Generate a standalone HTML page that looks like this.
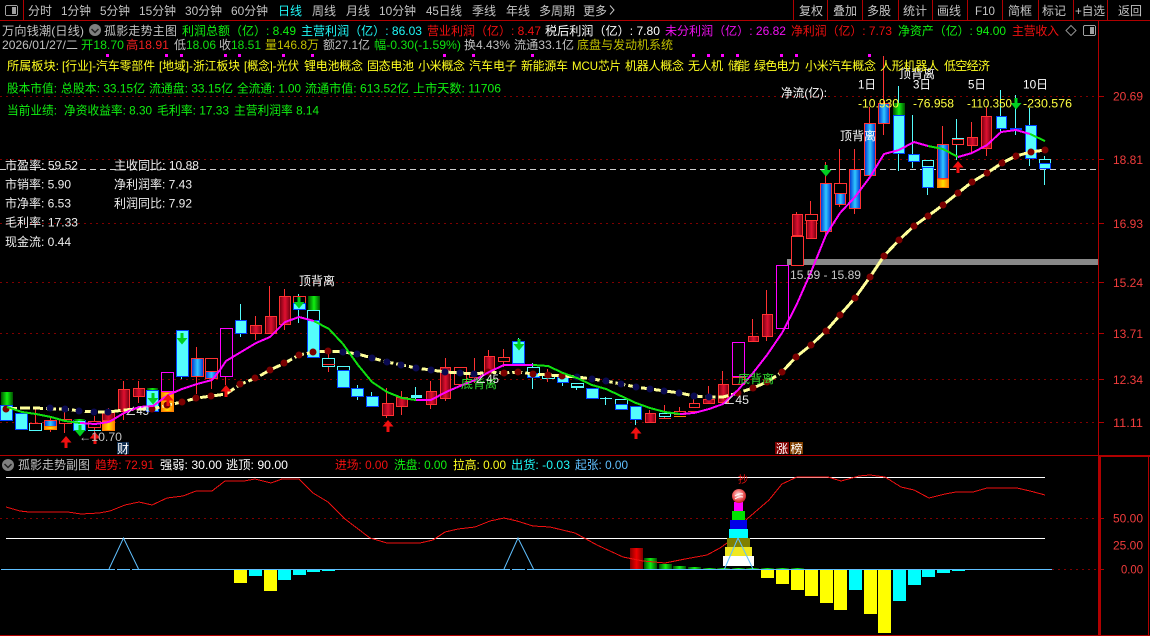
<!DOCTYPE html>
<html><head><meta charset="utf-8"><style>
html,body{margin:0;padding:0;background:#000;width:1150px;height:636px;overflow:hidden}
svg{display:block}
text{font-family:"Liberation Sans","WenQuanYi Zen Hei","Noto Sans CJK SC",sans-serif;font-size:12px}
.s{shape-rendering:crispEdges}
polyline{shape-rendering:crispEdges}
.c{fill:#54fcfc;stroke:#0040ff}
.r{fill:#000;stroke:#ff3232}
.rg{fill:url(#rg);stroke:#ff3232}
.bg{fill:url(#bg);stroke:#ff3232}
.bc{fill:#000;stroke:#54fcfc}
.og{fill:url(#og);stroke:#ff8000}
.gg{fill:url(#gg)}
.m{fill:none;stroke:#ff00ff}
.dn{fill:#0a0a50}.dr{fill:#7a0000}
</style></head><body>
<svg xmlns="http://www.w3.org/2000/svg" width="1150" height="636" viewBox="0 0 1150 636">
<defs>
<linearGradient id="rg" x1="0" x2="1" y1="0" y2="0"><stop offset="0" stop-color="#700010"/><stop offset=".5" stop-color="#e01030"/><stop offset="1" stop-color="#700010"/></linearGradient>
<linearGradient id="bg" x1="0" x2="1" y1="0" y2="0"><stop offset="0" stop-color="#0030d0"/><stop offset=".5" stop-color="#30c8ff"/><stop offset="1" stop-color="#0030d0"/></linearGradient>
<linearGradient id="og" x1="0" x2="1" y1="0" y2="0"><stop offset="0" stop-color="#ff8000"/><stop offset=".5" stop-color="#ffe000"/><stop offset="1" stop-color="#ff8000"/></linearGradient>
<linearGradient id="gg" x1="0" x2="1" y1="0" y2="0"><stop offset="0" stop-color="#005000"/><stop offset=".5" stop-color="#10f010"/><stop offset="1" stop-color="#005000"/></linearGradient>
<linearGradient id="rb" x1="0" x2="1" y1="0" y2="0"><stop offset="0" stop-color="#800000"/><stop offset=".5" stop-color="#f00000"/><stop offset="1" stop-color="#800000"/></linearGradient>
<radialGradient id="ball" cx=".45" cy=".4" r=".6"><stop offset="0" stop-color="#ffe8e8"/><stop offset=".6" stop-color="#f06060"/><stop offset="1" stop-color="#c02020"/></radialGradient>
<path id="ga" d="M-1.500 0h3v5h4l-5.500 6.500-5.500-6.500h4z" fill="#00d020"/>
<path id="ra" d="M0 0l5.500 6.500h-4v5.500h-3v-5.500h-4z" fill="#f01010"/>
</defs>
<rect width="1150" height="636" fill="#000"/>

<!-- grid -->
<g class="s" stroke="#800000" stroke-dasharray="2 4" fill="none">
<path d="M0 96.500H1098M0 159.500H1098M0 223.500H1098M0 282.500H1098M0 333.500H1098M0 379.500H1098M0 422.500H1098"/>
<path d="M0 518.500H1098"/><path d="M1052 569.500H1098"/>
</g>
<path class="s" d="M0 169.500H1098" stroke="#d0d0d0" stroke-dasharray="6 4" fill="none"/>
<rect class="s" x="787" y="259" width="311" height="6" fill="#888"/>

<!-- wicks -->
<path class="s" fill="none" stroke="#ff3232" d="M35.500 407V428M50.500 418V432M64.500 412V433M94.500 416V443M108.500 408V421M123.500 381V420M138.500 381V403M196.500 347V394M211.500 364V389M225.500 377V385M255.500 316V340M269.500 286V316M284.500 289V330M328.500 348V372M386.500 388V418M401.500 391V415M430.500 381V409M445.500 358V401M474.500 358V383M488.500 350V356M503.500 349V367M547.500 369V382M649.500 410V413M664.500 405V418M679.500 407V411M693.500 399V403M708.500 386V399M722.500 371V384M752.500 319V336M766.500 290V341M796.500 212V266M810.500 201V239M825.500 162V237M839.500 149V207M854.500 149V214M869.500 107V123M883.500 56V135M942.500 126V144M971.500 122V153M986.500 107V156"/>
<path class="s" fill="none" stroke="#54fcfc" d="M181.500 330V379M240.500 304V337M298.500 294V323M313.500 310V320M357.500 385V400M371.500 392V407M415.500 387V400M518.500 338V341M532.500 363V389M562.500 383V386M576.500 388V390M605.500 397V405M600 398.500H612M635.500 420V425M898.500 86V171M912.500 115V168M927.500 188V195M956.500 119V160M1000.500 90V132M1015.500 95V135M1029.500 108V166M1044.500 156V185"/>

<!-- candles -->
<g class="s">
<rect class="gg" x="1" y="392" width="12" height="13"/><rect class="c" x=".5" y="405.500" width="12" height="15"/>
<rect class="c" x="15.500" y="413.500" width="12" height="16"/>
<rect class="bc" x="29.500" y="423.500" width="12" height="7"/><path d="M30 423.500H41" stroke="#ff3232"/>
<rect class="bg" x="44.500" y="420.500" width="12" height="6"/><rect class="og" x="44.500" y="426.500" width="12" height="3"/>
<rect class="r" x="59.500" y="419.500" width="12" height="4"/>
<rect class="c" x="73.500" y="420.500" width="12" height="10"/><rect class="gg" x="74" y="419" width="11" height="2"/>
<rect class="r" x="88.500" y="421.500" width="12" height="6"/><path d="M88 430.500H101" stroke="#54fcfc"/>
<rect class="rg" x="102.500" y="411.500" width="12" height="9"/><rect class="og" x="102.500" y="421.500" width="12" height="9"/>
<rect class="rg" x="118.500" y="389.500" width="11" height="22"/>
<rect class="rg" x="133.500" y="388.500" width="11" height="8"/>
<rect class="c" x="146.500" y="390.500" width="12" height="21"/><rect class="gg" x="147" y="388" width="11" height="2"/>
<rect class="m" x="161.500" y="372.500" width="12" height="19"/><rect class="og" x="161.500" y="392.500" width="12" height="19"/>
<rect class="c" x="176.500" y="330.500" width="12" height="46"/>
<rect class="bg" x="191.500" y="358.500" width="12" height="18"/>
<rect class="r" x="205.500" y="358.500" width="12" height="13"/><rect class="bg" x="205.500" y="371.500" width="12" height="7"/>
<rect class="m" x="220.500" y="328.500" width="12" height="48"/>
<rect class="c" x="235.500" y="320.500" width="11" height="13"/>
<rect class="rg" x="250.500" y="325.500" width="11" height="8"/>
<rect class="rg" x="265.500" y="316.500" width="11" height="17"/>
<rect class="rg" x="279.500" y="296.500" width="11" height="28"/>
<rect class="r" x="293.500" y="296.500" width="12" height="7"/><rect class="c" x="293.500" y="303.500" width="12" height="6"/>
<rect class="gg" x="308" y="296" width="12" height="14"/><rect class="bc" x="307.500" y="310.500" width="12" height="10"/><rect class="c" x="307.500" y="320.500" width="12" height="37"/>
<rect class="bc" x="322.500" y="358.500" width="12" height="8"/><path d="M323 364.500H335" stroke="#ff3232"/>
<rect class="bc" x="337.500" y="366.500" width="12" height="4"/><rect class="c" x="337.500" y="370.500" width="12" height="17"/>
<rect class="c" x="351.500" y="388.500" width="12" height="8"/>
<rect class="c" x="366.500" y="396.500" width="12" height="10"/>
<rect class="rg" x="382.500" y="403.500" width="11" height="12"/>
<rect class="rg" x="396.500" y="397.500" width="11" height="9"/>
<rect class="s" x="411" y="395" width="11" height="3" fill="#54fcfc"/>
<rect class="rg" x="426.500" y="391.500" width="10" height="13"/>
<rect class="rg" x="440.500" y="367.500" width="10" height="31"/>
<rect class="r" x="454.500" y="367.500" width="12" height="17"/>
<rect class="r" x="469.500" y="372.500" width="11" height="5"/>
<rect class="rg" x="484.500" y="356.500" width="10" height="16"/>
<rect class="r" x="498.500" y="357.500" width="11" height="4"/>
<rect class="c" x="512.500" y="341.500" width="12" height="22"/>
<rect class="bc" x="527.500" y="367.500" width="12" height="6"/><rect class="c" x="527.500" y="373.500" width="12" height="4"/>
<rect class="bc" x="542.500" y="375.500" width="12" height="3"/>
<rect class="c" x="557.500" y="377.500" width="11" height="5"/>
<rect class="bc" x="571.500" y="383.500" width="12" height="4"/><path d="M572 386.500H583" stroke="#54fcfc"/>
<rect class="c" x="586.500" y="388.500" width="12" height="10"/>
<rect class="bc" x="615.500" y="399.500" width="12" height="5"/><rect class="c" x="615.500" y="404.500" width="12" height="5"/>
<rect class="c" x="630.500" y="406.500" width="11" height="13"/>
<rect class="rg" x="645.500" y="413.500" width="10" height="9"/>
<rect class="bc" x="659.500" y="413.500" width="11" height="3"/><path d="M659 418.500H671" stroke="#ff3232"/>
<rect class="r" x="674.500" y="411.500" width="11" height="3"/><path d="M674 416.500H686" stroke="#ff8000"/>
<rect class="r" x="689.500" y="403.500" width="10" height="4"/><path d="M688 411.500H700" stroke="#ff3232"/>
<rect class="rg" x="703.500" y="399.500" width="11" height="4"/>
<rect class="rg" x="718.500" y="384.500" width="10" height="18"/>
<rect class="m" x="732.500" y="342.500" width="12" height="34"/><rect class="r" x="732.500" y="377.500" width="12" height="7"/>
<rect class="rg" x="748.500" y="336.500" width="10" height="5"/>
<rect class="rg" x="762.500" y="314.500" width="10" height="22"/>
<rect class="m" x="776.500" y="265.500" width="12" height="63"/>
<rect class="r" x="791.500" y="236.500" width="12" height="29"/><rect class="rg" x="792.500" y="214.500" width="10" height="21"/>
<rect class="r" x="805.500" y="214.500" width="12" height="6"/><rect class="rg" x="806.500" y="220.500" width="10" height="18"/>
<rect class="bg" x="820.500" y="183.500" width="11" height="48"/>
<rect class="r" x="834.500" y="183.500" width="12" height="10"/><rect class="bg" x="835.500" y="193.500" width="10" height="11"/>
<rect class="bg" x="849.500" y="169.500" width="11" height="39"/>
<rect class="bg" x="864.500" y="123.500" width="11" height="52"/>
<rect class="bg" x="878.500" y="103.500" width="11" height="20"/>
<rect class="gg" x="893" y="103" width="12" height="12"/><rect class="c" x="893.500" y="115.500" width="11" height="38"/>
<rect class="c" x="908.500" y="154.500" width="11" height="7"/>
<rect class="bc" x="922.500" y="160.500" width="11" height="6"/><rect class="c" x="922.500" y="167.500" width="11" height="20"/>
<rect class="bg" x="937.500" y="144.500" width="11" height="34"/><rect class="og" x="937.500" y="179.500" width="11" height="8"/>
<rect class="r" x="952.500" y="139.500" width="11" height="5"/><path d="M952 138.500H964" stroke="#54fcfc"/>
<rect class="rg" x="967.500" y="137.500" width="10" height="8"/>
<rect class="rg" x="981.500" y="116.500" width="10" height="32"/>
<rect class="c" x="996.500" y="116.500" width="10" height="12"/>
<rect class="c" x="1010.500" y="128.500" width="11" height="1"/>
<rect class="c" x="1025.500" y="125.500" width="11" height="33"/>
<rect class="bc" x="1039.500" y="159.500" width="11" height="4"/><rect class="c" x="1039.500" y="163.500" width="11" height="5"/>
</g>

<!-- cream MA -->
<polyline fill="none" stroke="#ffff99" stroke-width="3" stroke-dasharray="10 3" points="7,409 22,408 36,408 51,409 65,409 80,411 95,412 109,412 124,410 139,409 153,409 168,405 182,402 197,398 212,396 226,394 241,384 256,378 270,370 285,363 299,355 314,352 329,351 343,352 358,354 372,358 387,362 402,365 416,368 431,370 446,372 460,373 475,374 489,372 504,373 519,372 533,374 548,375 563,376 577,377 592,379 606,381 621,384 636,387 650,389 665,391 680,393 694,396 709,397 723,397 738,393 753,388 767,382 782,372"/>
<polyline fill="none" stroke="#ffff99" stroke-width="3" points="782,372 796,357 811,345 826,331 840,315 855,298 870,277 884,256 899,240 914,226 928,216 943,205 958,193 972,182 987,173 1002,163 1016,156 1031,152 1045,150"/>
<!-- dots -->
<g>
<circle class="dr" cx="6" cy="409" r="3.500"/>
<circle class="dn" cx="50" cy="408" r="3.500"/><circle class="dn" cx="65" cy="409" r="3.500"/><circle class="dn" cx="79" cy="411" r="3.500"/><circle class="dn" cx="94" cy="412" r="3.500"/><circle class="dn" cx="108" cy="412" r="3.500"/>
<circle class="dr" cx="152" cy="409" r="3.500"/><circle class="dr" cx="167" cy="405" r="3.500"/><circle class="dr" cx="182" cy="402" r="3.500"/><circle class="dr" cx="196" cy="398" r="3.500"/><circle class="dr" cx="211" cy="396" r="3.500"/>
<circle class="dr" cx="240" cy="384" r="3.500"/><circle class="dr" cx="255" cy="378" r="3.500"/><circle class="dr" cx="270" cy="370" r="3.500"/><circle class="dr" cx="284" cy="363" r="3.500"/><circle class="dr" cx="299" cy="355" r="3.500"/><circle class="dr" cx="313" cy="352" r="3.500"/><circle class="dr" cx="328" cy="351" r="3.500"/>
<circle class="dn" cx="343" cy="352" r="3.500"/><circle class="dn" cx="357" cy="354" r="3.500"/><circle class="dn" cx="372" cy="358" r="3.500"/><circle class="dn" cx="387" cy="362" r="3.500"/><circle class="dn" cx="401" cy="365" r="3.500"/><circle class="dn" cx="416" cy="368" r="3.500"/><circle class="dn" cx="431" cy="370" r="3.500"/><circle class="dn" cx="445" cy="372" r="3.500"/><circle class="dn" cx="460" cy="373" r="3.500"/><circle class="dn" cx="474" cy="374" r="3.500"/>
<circle class="dr" cx="488" cy="372" r="3.500"/><circle class="dr" cx="504" cy="373" r="3.500"/><circle class="dr" cx="518" cy="372" r="3.500"/><circle class="dr" cx="533" cy="374" r="3.500"/><circle class="dr" cx="548" cy="375" r="3.500"/><circle class="dr" cx="562" cy="376" r="3.500"/>
<circle class="dn" cx="577" cy="377" r="3.500"/><circle class="dn" cx="592" cy="379" r="3.500"/><circle class="dn" cx="606" cy="381" r="3.500"/><circle class="dn" cx="621" cy="384" r="3.500"/><circle class="dn" cx="636" cy="387" r="3.500"/><circle class="dn" cx="650" cy="389" r="3.500"/><circle class="dn" cx="664" cy="391" r="3.500"/><circle class="dn" cx="679" cy="393" r="3.500"/><circle class="dn" cx="694" cy="396" r="3.500"/><circle class="dn" cx="709" cy="397" r="3.500"/>
<circle class="dr" cx="738" cy="393" r="3.500"/><circle class="dr" cx="753" cy="388" r="3.500"/><circle class="dr" cx="767" cy="382" r="3.500"/><circle class="dr" cx="782" cy="372" r="3.500"/><circle class="dr" cx="796" cy="357" r="3.500"/><circle class="dr" cx="811" cy="345" r="3.500"/><circle class="dr" cx="826" cy="331" r="3.500"/><circle class="dr" cx="840" cy="315" r="3.500"/><circle class="dr" cx="855" cy="298" r="3.500"/>
<circle class="dr" cx="870" cy="277" r="3.500"/><circle class="dr" cx="884" cy="256" r="3.500"/><circle class="dr" cx="899" cy="240" r="3.500"/><circle class="dr" cx="914" cy="226" r="3.500"/><circle class="dr" cx="928" cy="216" r="3.500"/><circle class="dr" cx="943" cy="205" r="3.500"/><circle class="dr" cx="958" cy="193" r="3.500"/><circle class="dr" cx="972" cy="182" r="3.500"/><circle class="dr" cx="987" cy="173" r="3.500"/><circle class="dr" cx="1002" cy="163" r="3.500"/><circle class="dr" cx="1016" cy="156" r="3.500"/><circle class="dr" cx="1031" cy="152" r="3.500"/><circle class="dr" cx="1045" cy="150" r="3.500"/>
</g>
<!-- trend line -->
<g fill="none" stroke-width="2">
<polyline stroke="#10e010" points="7,407 22,412 36,414 51,417 65,421 80,423"/>
<polyline stroke="#ff00ff" points="80,423 95,424 109,422 124,413 139,407 153,406 168,395 182,389 197,384 212,380 220,370 226,361 241,352 256,343 270,337 285,322 299,317 314,321"/>
<polyline stroke="#10e010" points="314,321 329,329 343,344 358,365 372,382 387,392 402,398 416,400"/>
<polyline stroke="#ff00ff" points="416,400 431,400 446,392 460,386 475,380 489,372 504,365 519,365 533,365"/>
<polyline stroke="#10e010" points="533,365 548,366 563,373 577,378 592,385 606,389 621,396 636,403 650,408 665,412 680,414"/>
<polyline stroke="#ff00ff" points="680,414 694,413 709,409 723,404 738,390 753,373 767,355 782,333 796,306 811,272 826,235 840,213 855,197 870,177 884,154 899,150 914,142 928,146"/>
<polyline stroke="#10e010" points="928,146 943,149 958,157"/>
<polyline stroke="#ff00ff" points="958,157 972,153 987,145 1001,132 1016,130 1030,134"/>
<polyline stroke="#10e010" points="1030,134 1045,141"/>
</g>
<!-- arrows -->
<use href="#ga" x="80" y="425"/><use href="#ga" x="153" y="393"/><use href="#ga" x="182" y="333"/><use href="#ga" x="299" y="297"/><use href="#ga" x="519" y="339"/><use href="#ga" x="826" y="165"/><use href="#ga" x="1016" y="98"/>
<use href="#ra" x="66" y="436"/><use href="#ra" x="95" y="432"/><use href="#ra" x="168" y="394"/><use href="#ra" x="226" y="385"/><use href="#ra" x="388" y="420"/><use href="#ra" x="636" y="427"/><use href="#ra" x="958" y="161"/>

<!-- chart labels -->
<text x="299" y="285" fill="#fff" textLength="36" lengthAdjust="spacingAndGlyphs">顶背离</text>
<text x="840" y="140" fill="#fff" textLength="36" lengthAdjust="spacingAndGlyphs">顶背离</text>
<text x="899" y="78" fill="#fff" textLength="36" lengthAdjust="spacingAndGlyphs">顶背离</text>
<text x="461" y="388" fill="#30e030" textLength="36" lengthAdjust="spacingAndGlyphs">底背离</text>
<text x="738" y="383" fill="#30e030" textLength="36" lengthAdjust="spacingAndGlyphs">底背离</text>
<text x="125" y="415" fill="#e8e8e8" textLength="24" lengthAdjust="spacingAndGlyphs">∠45</text>
<text x="475" y="383" fill="#e8e8e8" textLength="24" lengthAdjust="spacingAndGlyphs">∠45</text>
<text x="723" y="404" fill="#e8e8e8" textLength="26" lengthAdjust="spacingAndGlyphs">∠45</text>
<text x="79" y="441" fill="#c0c0c0" textLength="43" lengthAdjust="spacingAndGlyphs">←10.70</text>
<rect x="117" y="442" width="12" height="12" fill="#102e50"/><text x="117" y="453" fill="#fff">财</text>
<rect x="775" y="442" width="14" height="12" fill="#800000"/><text x="776" y="453" fill="#fff">涨</text>
<rect x="790" y="442" width="13" height="12" fill="#804000"/><text x="790.500" y="453" fill="#fff">榜</text>
<text x="790" y="279" fill="#c8c8c8" textLength="71" lengthAdjust="spacingAndGlyphs">15.59 - 15.89</text>
<text x="781" y="97" fill="#fff" textLength="46" lengthAdjust="spacingAndGlyphs">净流(亿):</text>
<g fill="#fff">
<text x="858" y="88.500" textLength="18" lengthAdjust="spacingAndGlyphs">1日</text>
<text x="913" y="88.500" textLength="18" lengthAdjust="spacingAndGlyphs">3日</text>
<text x="968" y="88.500" textLength="18" lengthAdjust="spacingAndGlyphs">5日</text>
<text x="1023" y="88.500" textLength="25" lengthAdjust="spacingAndGlyphs">10日</text>
</g>
<g fill="#ffff40">
<text x="858" y="107.500" textLength="41" lengthAdjust="spacingAndGlyphs">-10.930</text>
<text x="913" y="107.500" textLength="41" lengthAdjust="spacingAndGlyphs">-76.958</text>
<text x="967" y="107.500" textLength="45" lengthAdjust="spacingAndGlyphs">-110.350</text>
<text x="1023" y="107.500" textLength="49" lengthAdjust="spacingAndGlyphs">-230.576</text>
</g>

<!-- left stats -->
<g fill="#eee">
<text x="5" y="169.500" textLength="73" lengthAdjust="spacingAndGlyphs">市盈率: 59.52</text>
<text x="5" y="188.500" textLength="66" lengthAdjust="spacingAndGlyphs">市销率: 5.90</text>
<text x="5" y="207.500" textLength="66" lengthAdjust="spacingAndGlyphs">市净率: 6.53</text>
<text x="5" y="226.500" textLength="73" lengthAdjust="spacingAndGlyphs">毛利率: 17.33</text>
<text x="5" y="246" textLength="66" lengthAdjust="spacingAndGlyphs">现金流: 0.44</text>
<text x="114" y="169.500" textLength="85" lengthAdjust="spacingAndGlyphs">主收同比: 10.88</text>
<text x="114" y="188.500" textLength="78" lengthAdjust="spacingAndGlyphs">净利润率: 7.43</text>
<text x="114" y="207.500" textLength="78" lengthAdjust="spacingAndGlyphs">利润同比: 7.92</text>
</g>

<!-- info rows -->
<g fill="#ffff20">
<text x="7" y="70" textLength="52" lengthAdjust="spacingAndGlyphs">所属板块:</text>
<text x="62" y="70" textLength="93" lengthAdjust="spacingAndGlyphs">[行业]-汽车零部件</text>
<text x="159" y="70" textLength="81" lengthAdjust="spacingAndGlyphs">[地域]-浙江板块</text>
<text x="244" y="70" textLength="55" lengthAdjust="spacingAndGlyphs">[概念]-光伏</text>
<text x="304" y="70" textLength="59">锂电池概念</text>
<text x="367" y="70" textLength="47">固态电池</text>
<text x="418" y="70" textLength="47">小米概念</text>
<text x="469" y="70" textLength="48">汽车电子</text>
<text x="521" y="70" textLength="47">新能源车</text>
<text x="572" y="70" textLength="49" lengthAdjust="spacingAndGlyphs">MCU芯片</text>
<text x="625" y="70" textLength="59">机器人概念</text>
<text x="688" y="70" textLength="35">无人机</text>
<text x="728" y="70" textLength="22">储能</text>
<text x="754" y="70" textLength="46">绿色电力</text>
<text x="805" y="70" textLength="71">小米汽车概念</text>
<text x="880" y="70" textLength="59">人形机器人</text>
<text x="944" y="70" textLength="46">低空经济</text>
</g>
<g class="s" fill="#ff00ff"><rect x="106" y="54" width="3" height="3"/><rect x="165" y="54" width="3" height="3"/><rect x="180" y="54" width="3" height="3"/><rect x="224" y="54" width="3" height="3"/><rect x="238" y="54" width="3" height="3"/><rect x="282" y="54" width="3" height="3"/><rect x="311" y="54" width="3" height="3"/><rect x="443" y="54" width="3" height="3"/><rect x="472" y="54" width="3" height="3"/><rect x="531" y="54" width="3" height="3"/><rect x="692" y="54" width="3" height="3"/><rect x="707" y="54" width="3" height="3"/><rect x="721" y="54" width="3" height="3"/><rect x="736" y="54" width="3" height="3"/><rect x="780" y="54" width="3" height="3"/><rect x="795" y="54" width="3" height="3"/><rect x="868" y="54" width="3" height="3"/></g>
<g fill="#10f010">
<text x="7" y="92.500" textLength="50" lengthAdjust="spacingAndGlyphs">股本市值:</text>
<text x="61" y="92.500" textLength="84" lengthAdjust="spacingAndGlyphs">总股本: 33.15亿</text>
<text x="149" y="92.500" textLength="84" lengthAdjust="spacingAndGlyphs">流通盘: 33.15亿</text>
<text x="237" y="92.500" textLength="64" lengthAdjust="spacingAndGlyphs">全流通: 1.00</text>
<text x="305" y="92.500" textLength="104" lengthAdjust="spacingAndGlyphs">流通市值: 613.52亿</text>
<text x="413" y="92.500" textLength="88" lengthAdjust="spacingAndGlyphs">上市天数: 11706</text>
<text x="7" y="114.500" textLength="50" lengthAdjust="spacingAndGlyphs">当前业绩:</text>
<text x="64" y="114.500" textLength="88" lengthAdjust="spacingAndGlyphs">净资收益率: 8.30</text>
<text x="157" y="114.500" textLength="72" lengthAdjust="spacingAndGlyphs">毛利率: 17.33</text>
<text x="234" y="114.500" textLength="85" lengthAdjust="spacingAndGlyphs">主营利润率 8.14</text>
</g>

<!-- row 2 -->
<text x="2" y="35" fill="#c0c0c0" textLength="82" lengthAdjust="spacingAndGlyphs">万向钱潮(日线)</text>
<circle cx="95" cy="30" r="6" fill="#808080"/><path d="M91.500 29l3.500 3.500 3.500-3.500" fill="none" stroke="#222" stroke-width="1.500"/>
<text x="104" y="35" fill="#c0c0c0" textLength="73">孤影走势主图</text>
<text x="182" y="35" fill="#10f010" textLength="114" lengthAdjust="spacingAndGlyphs">利润总额（亿）: 8.49</text>
<text x="301" y="35" fill="#20f8f8" textLength="121" lengthAdjust="spacingAndGlyphs">主营利润（亿）: 86.03</text>
<text x="427" y="35" fill="#f01010" textLength="114" lengthAdjust="spacingAndGlyphs">营业利润（亿）: 8.47</text>
<text x="545" y="35" fill="#fff" textLength="115" lengthAdjust="spacingAndGlyphs">税后利润（亿）: 7.80</text>
<text x="665" y="35" fill="#f010f0" textLength="121" lengthAdjust="spacingAndGlyphs">未分利润（亿）: 26.82</text>
<text x="791" y="35" fill="#f01010" textLength="101" lengthAdjust="spacingAndGlyphs">净利润（亿）: 7.73</text>
<text x="898" y="35" fill="#10f010" textLength="108" lengthAdjust="spacingAndGlyphs">净资产（亿）: 94.00</text>
<text x="1012" y="35" fill="#f01010" textLength="47">主营收入</text>
<path d="M1071 25.500l5 5-5 5-5-5z" fill="none" stroke="#909090"/>
<rect class="s" x="1083.500" y="25.500" width="12" height="10" rx="1.500" fill="#000" stroke="#a0a0a0"/><rect class="s" x="1090" y="27" width="4" height="7" fill="#a0a0a0"/>

<!-- row 3 -->
<text x="2" y="49" fill="#c0c0c0" textLength="76" lengthAdjust="spacingAndGlyphs">2026/01/27/二</text>
<text x="81" y="49" fill="#10e010" textLength="43" lengthAdjust="spacingAndGlyphs">开18.70</text>
<text x="126" y="49" fill="#f02020" textLength="43" lengthAdjust="spacingAndGlyphs">高18.91</text>
<text x="174" y="49" fill="#c0c0c0" textLength="12">低</text><text x="186" y="49" fill="#10e010" textLength="30" lengthAdjust="spacingAndGlyphs">18.06</text>
<text x="219" y="49" fill="#c0c0c0" textLength="12">收</text><text x="231" y="49" fill="#10e010" textLength="30" lengthAdjust="spacingAndGlyphs">18.51</text>
<text x="265" y="49" fill="#c0c000" textLength="54" lengthAdjust="spacingAndGlyphs">量146.8万</text>
<text x="323" y="49" fill="#c0c0c0" textLength="47" lengthAdjust="spacingAndGlyphs">额27.1亿</text>
<text x="374" y="49" fill="#10e010" textLength="87" lengthAdjust="spacingAndGlyphs">幅-0.30(-1.59%)</text>
<text x="464" y="49" fill="#c0c0c0" textLength="46" lengthAdjust="spacingAndGlyphs">换4.43%</text>
<text x="514" y="49" fill="#c0c0c0" textLength="60" lengthAdjust="spacingAndGlyphs">流通33.1亿</text>
<text x="577" y="49" fill="#c0c000" textLength="96">底盘与发动机系统</text>

<!-- toolbar -->
<g class="s" stroke="#b00000" fill="none">
<path d="M0 20.500H1150M23.500 0V20M793.500 0V20M827.500 0V20M862.500 0V20M898.500 0V20M932.500 0V20M967.500 0V20M1002.500 0V20M1038.500 0V20M1073.500 0V20M1107.500 0V20"/>
<path d="M1098.500 20V636M1099.500 456V636M1100.500 456V636M1148.500 456V636M0 455.500H1150M0 635.500H1150M1099 456.500H1150"/>
<path d="M1098 96.500H1104M1098 159.500H1104M1098 223.500H1104M1098 282.500H1104M1098 333.500H1104M1098 379.500H1104M1098 422.500H1104M1100 518.500H1104M1100 569.500H1104"/>
</g>
<rect class="s" x="5.500" y="5.500" width="12" height="10" rx="1.500" fill="#000" stroke="#a0a0a0"/><rect class="s" x="12" y="7" width="4" height="7" fill="#a0a0a0"/>
<g fill="#c4c4c4">
<text x="28" y="15">分时</text><text x="61" y="15" textLength="30" lengthAdjust="spacingAndGlyphs">1分钟</text><text x="100" y="15" textLength="30" lengthAdjust="spacingAndGlyphs">5分钟</text><text x="139" y="15" textLength="37" lengthAdjust="spacingAndGlyphs">15分钟</text><text x="185" y="15" textLength="37" lengthAdjust="spacingAndGlyphs">30分钟</text><text x="231" y="15" textLength="37" lengthAdjust="spacingAndGlyphs">60分钟</text>
<text x="278" y="15" fill="#20f8f8">日线</text><text x="312" y="15">周线</text><text x="346" y="15">月线</text><text x="379" y="15" textLength="37" lengthAdjust="spacingAndGlyphs">10分钟</text><text x="426" y="15" textLength="36" lengthAdjust="spacingAndGlyphs">45日线</text><text x="472" y="15">季线</text><text x="506" y="15">年线</text><text x="539" y="15">多周期</text><text x="583" y="15">更多</text>
<path d="M610 5.500l4 4.500-4 4.500" fill="none" stroke="#c4c4c4"/>
<text x="799" y="15">复权</text><text x="833" y="15">叠加</text><text x="867" y="15">多股</text><text x="903" y="15">统计</text><text x="937" y="15">画线</text><text x="975" y="15" textLength="20" lengthAdjust="spacingAndGlyphs">F10</text><text x="1008" y="15">简框</text><text x="1042" y="15">标记</text><text x="1075" y="15" textLength="30" lengthAdjust="spacingAndGlyphs">+自选</text><text x="1118" y="15">返回</text>
</g>

<!-- axis labels -->
<g fill="#f03c3c">
<text x="1113" y="100.500" textLength="30" lengthAdjust="spacingAndGlyphs">20.69</text>
<text x="1113" y="164" textLength="30" lengthAdjust="spacingAndGlyphs">18.81</text>
<text x="1113" y="228" textLength="30" lengthAdjust="spacingAndGlyphs">16.93</text>
<text x="1113" y="287" textLength="30" lengthAdjust="spacingAndGlyphs">15.24</text>
<text x="1113" y="338" textLength="30" lengthAdjust="spacingAndGlyphs">13.71</text>
<text x="1113" y="384" textLength="30" lengthAdjust="spacingAndGlyphs">12.34</text>
<text x="1113" y="427" textLength="30" lengthAdjust="spacingAndGlyphs">11.11</text>
<text x="1113" y="522.500" textLength="30" lengthAdjust="spacingAndGlyphs">50.00</text>
<text x="1113" y="549.500" textLength="30" lengthAdjust="spacingAndGlyphs">25.00</text>
<text x="1121" y="573.500" textLength="22" lengthAdjust="spacingAndGlyphs">0.00</text>
</g>

<!-- sub chart header -->
<circle cx="8" cy="465" r="6" fill="#808080"/><path d="M4.500 464l3.500 3.500 3.500-3.500" fill="none" stroke="#222" stroke-width="1.500"/>
<text x="18" y="469" fill="#c0c0c0" textLength="72">孤影走势副图</text>
<text x="95" y="469" fill="#f01010" textLength="59" lengthAdjust="spacingAndGlyphs">趋势: 72.91</text>
<text x="160" y="469" fill="#fff" textLength="62" lengthAdjust="spacingAndGlyphs">强弱: 30.00</text>
<text x="226" y="469" fill="#fff" textLength="62" lengthAdjust="spacingAndGlyphs">逃顶: 90.00</text>
<text x="335" y="469" fill="#f01010" textLength="53" lengthAdjust="spacingAndGlyphs">进场: 0.00</text>
<text x="394" y="469" fill="#10f010" textLength="53" lengthAdjust="spacingAndGlyphs">洗盘: 0.00</text>
<text x="453" y="469" fill="#ffff20" textLength="53" lengthAdjust="spacingAndGlyphs">拉高: 0.00</text>
<text x="511" y="469" fill="#20f8f8" textLength="59" lengthAdjust="spacingAndGlyphs">出货: -0.03</text>
<text x="575" y="469" fill="#60c0ff" textLength="53" lengthAdjust="spacingAndGlyphs">起张: 0.00</text>

<!-- sub chart -->
<g class="s">
<path d="M6 477.500H1045M6 538.500H1045" stroke="#fff" fill="none"/>
<g fill="#ffff00"><rect x="234" y="570" width="13" height="13"/><rect x="264" y="570" width="13" height="21"/><rect x="761" y="570" width="13" height="8"/><rect x="776" y="570" width="13" height="14"/><rect x="791" y="570" width="13" height="20"/><rect x="805" y="570" width="13" height="26"/><rect x="820" y="570" width="13" height="33"/><rect x="834" y="570" width="13" height="40"/><rect x="864" y="570" width="13" height="44"/><rect x="878" y="570" width="13" height="63"/></g>
<g fill="#00ffff"><rect x="249" y="570" width="13" height="6"/><rect x="278" y="570" width="13" height="10"/><rect x="293" y="570" width="13" height="5"/><rect x="307" y="570" width="13" height="2"/><rect x="322" y="570" width="13" height="1"/><rect x="849" y="570" width="13" height="20"/><rect x="893" y="570" width="13" height="31"/><rect x="908" y="570" width="13" height="15"/><rect x="922" y="570" width="13" height="7"/><rect x="937" y="570" width="13" height="3"/><rect x="952" y="570" width="13" height="1"/></g>
<rect x="630" y="548" width="13" height="21" fill="url(#rb)"/>
<g fill="url(#gg)"><rect x="644" y="558" width="13" height="11"/><rect x="659" y="564" width="13" height="5"/><rect x="673" y="566" width="13" height="3"/><rect x="688" y="567" width="13" height="2"/><rect x="703" y="568" width="13" height="1"/><rect x="717" y="568" width="13" height="1"/><rect x="732" y="568" width="13" height="1"/><rect x="746" y="568" width="13" height="1"/><rect x="761" y="568" width="13" height="1"/><rect x="776" y="568" width="13" height="1"/><rect x="791" y="568" width="13" height="1"/></g>
</g>
<polyline fill="none" stroke="#f01010" points="6,507 20,511 29,512 68,512 81,514 99,513 110,511 125,505 139,502 152,505 167,498 183,496 196,491 212,491 225,481 244,481 255,479 271,483 282,479 299,479 313,493 328,502 345,519 370,538 387,543 420,543 433,540 445,532 458,529 475,527 490,521 504,518 517,521 533,526 550,527 575,533 586,539 597,545 623,557 643,561 665,563 685,559 707,555 720,548 727,543 747,519 769,500 782,484 797,477 828,477 841,481 852,478 859,476 870,475 885,477 901,487 914,490 929,498 945,494 956,492 973,492 987,488 1017,488 1030,491 1045,495"/>
<g class="s">
<rect x="723" y="556" width="31" height="10" fill="#fff"/>
<rect x="725" y="547" width="27" height="9" fill="#f0e820"/>
<rect x="727" y="538" width="23" height="9" fill="#808000"/>
<rect x="729" y="529" width="19" height="9" fill="#00ffff"/>
<rect x="730" y="520" width="17" height="9" fill="#0000e8"/>
<rect x="732" y="511" width="13" height="9" fill="#00e000"/>
<rect x="734" y="502" width="9" height="9" fill="#ff00ff"/>
</g>
<circle cx="739" cy="496" r="7" fill="url(#ball)"/>
<path d="M735 496q4-3 8-2M735 499q4-3 8-2" stroke="#fff" fill="none"/>
<text x="738" y="483" fill="#f01010" style="font-size:10px">抄</text>
<path class="s" d="M1 569.500H1052" stroke="#60c0ff" fill="none"/>
<g stroke="#000" fill="none" class="s"><path d="M115 569.500H117M130 569.500H132M510 569.500H512M525 569.500H527"/></g>
<g fill="none" stroke="#60c0ff">
<path d="M109 569L123.500 538 138.500 569"/>
<path d="M504 569L518 538 533.500 569"/>
<path d="M724.500 569L738 538 753 569"/>
</g>
</svg>
</body></html>
